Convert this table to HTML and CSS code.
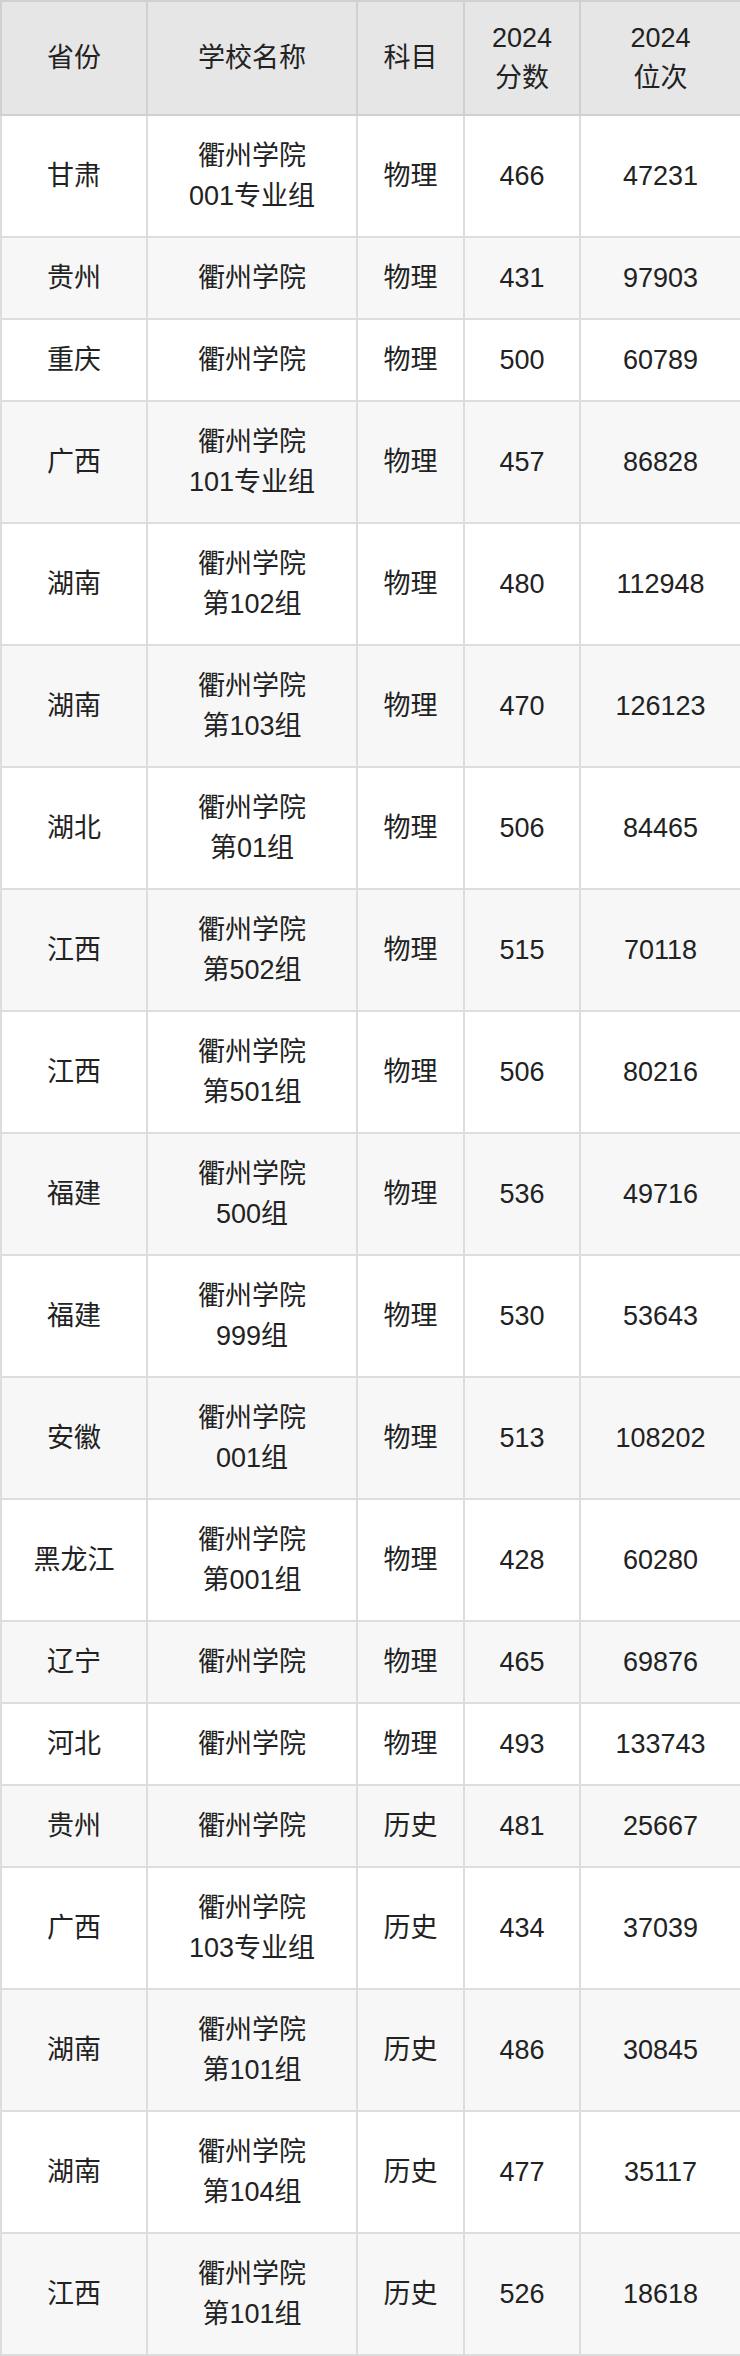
FILE: index.html
```html
<!DOCTYPE html>
<html lang="zh-CN">
<head>
<meta charset="utf-8">
<title>衢州学院 2024 分数线</title>
<link rel="stylesheet" href="styles.css">
</head>
<body>
<table class="scores">
  <colgroup>
    <col class="c-prov">
    <col class="c-school">
    <col class="c-subj">
    <col class="c-score">
    <col class="c-rank">
  </colgroup>
  <thead>
    <tr><th>省份</th><th>学校名称</th><th>科目</th><th>2024<br>分数</th><th>2024<br>位次</th></tr>
  </thead>
  <tbody>
    <tr><td>甘肃</td><td>衢州学院<br>001专业组</td><td>物理</td><td>466</td><td>47231</td></tr>
    <tr><td>贵州</td><td>衢州学院</td><td>物理</td><td>431</td><td>97903</td></tr>
    <tr><td>重庆</td><td>衢州学院</td><td>物理</td><td>500</td><td>60789</td></tr>
    <tr><td>广西</td><td>衢州学院<br>101专业组</td><td>物理</td><td>457</td><td>86828</td></tr>
    <tr><td>湖南</td><td>衢州学院<br>第102组</td><td>物理</td><td>480</td><td>112948</td></tr>
    <tr><td>湖南</td><td>衢州学院<br>第103组</td><td>物理</td><td>470</td><td>126123</td></tr>
    <tr><td>湖北</td><td>衢州学院<br>第01组</td><td>物理</td><td>506</td><td>84465</td></tr>
    <tr><td>江西</td><td>衢州学院<br>第502组</td><td>物理</td><td>515</td><td>70118</td></tr>
    <tr><td>江西</td><td>衢州学院<br>第501组</td><td>物理</td><td>506</td><td>80216</td></tr>
    <tr><td>福建</td><td>衢州学院<br>500组</td><td>物理</td><td>536</td><td>49716</td></tr>
    <tr><td>福建</td><td>衢州学院<br>999组</td><td>物理</td><td>530</td><td>53643</td></tr>
    <tr><td>安徽</td><td>衢州学院<br>001组</td><td>物理</td><td>513</td><td>108202</td></tr>
    <tr><td>黑龙江</td><td>衢州学院<br>第001组</td><td>物理</td><td>428</td><td>60280</td></tr>
    <tr><td>辽宁</td><td>衢州学院</td><td>物理</td><td>465</td><td>69876</td></tr>
    <tr><td>河北</td><td>衢州学院</td><td>物理</td><td>493</td><td>133743</td></tr>
    <tr><td>贵州</td><td>衢州学院</td><td>历史</td><td>481</td><td>25667</td></tr>
    <tr><td>广西</td><td>衢州学院<br>103专业组</td><td>历史</td><td>434</td><td>37039</td></tr>
    <tr><td>湖南</td><td>衢州学院<br>第101组</td><td>历史</td><td>486</td><td>30845</td></tr>
    <tr><td>湖南</td><td>衢州学院<br>第104组</td><td>历史</td><td>477</td><td>35117</td></tr>
    <tr><td>江西</td><td>衢州学院<br>第101组</td><td>历史</td><td>526</td><td>18618</td></tr>
  </tbody>
</table>
</body>
</html>
```
FILE: styles.css
```css
html, body {
  margin: 0;
  padding: 0;
  background: #ffffff;
}

.scores {
  width: 740px;
  border-collapse: collapse;
  table-layout: fixed;
  font-family: "Liberation Sans", "Noto Sans CJK SC", Arial, sans-serif;
  font-size: 27px;
  line-height: 40px;
  color: #222222;
}

.c-prov { width: 146px; }
.c-school { width: 210px; }
.c-subj { width: 107px; }
.c-score { width: 116px; }
.c-rank { width: 161px; }

.scores th,
.scores td {
  text-align: center;
  vertical-align: middle;
  padding: 20px 0;
  border: 2px solid #dddddd;
  font-weight: normal;
}

.scores th {
  background: #e6e6e6;
  border-color: #d0d0d0;
  padding: 16px 0;
}

.scores tbody tr:nth-child(odd) td {
  background: #ffffff;
}

.scores tbody tr:nth-child(even) td {
  background: #f7f7f7;
}
```
